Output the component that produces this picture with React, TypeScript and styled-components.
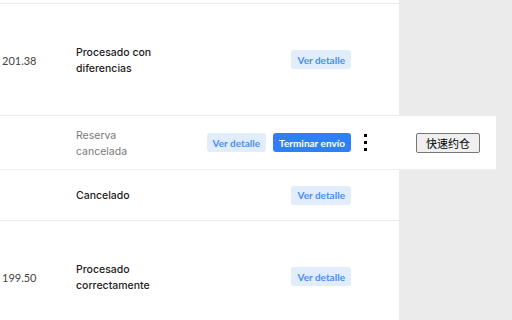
import React from "react";
import styled, { createGlobalStyle } from "styled-components";

const Global = createGlobalStyle`
  html, body { margin: 0; padding: 0; background: #ebebeb; }
  body { font-family: Lato, "Open Sans", sans-serif; overflow: hidden; }
`;

const Table = styled.div`
  width: 399px;
  min-height: 320px;
  background: #ffffff;
  padding-top: 3px;
  box-sizing: border-box;
`;

const Row = styled.div<{ $h: number }>`
  width: 399px;
  height: ${(p) => p.$h}px;
  display: flex;
  align-items: center;
  border-top: 1px solid #ebebeb;
  overflow: visible;
`;

const Amount = styled.div`
  width: 74px;
  padding-left: 2px;
  padding-top: 1px;
  font-size: 11px;
  color: #444;
  flex-shrink: 0;
`;

const Status = styled.div<{ $muted?: boolean }>`
  width: 130px;
  flex-shrink: 0;
  padding-top: 2px;
  font-family: Inter, Lato, sans-serif;
  font-size: 10.5px;
  line-height: 16px;
  font-weight: ${(p) => (p.$muted ? 400 : 500)};
  color: ${(p) => (p.$muted ? "#7a7a7a" : "#1c1c1c")};
`;

const Actions = styled.div`
  width: 145px;
  flex-shrink: 0;
  display: flex;
  justify-content: flex-end;
  gap: 7px;
`;

const Btn = styled.button<{ $primary?: boolean }>`
  height: 19px;
  padding: 0 6px;
  border: none;
  border-radius: 3px;
  font-family: Lato, sans-serif;
  font-size: 10px;
  font-weight: 700;
  cursor: pointer;
  background: ${(p) => (p.$primary ? "#2f80f8" : "#e2edfc")};
  color: ${(p) => (p.$primary ? "#ffffff" : "#4a8ef2")};
`;

const Menu = styled.div`
  width: 35px;
  padding-left: 13px;
  flex-shrink: 0;
  display: flex;
  flex-direction: column;
  gap: 4px;
`;

const Dot = styled.span`
  width: 3px;
  height: 3px;
  background: #000;
`;

const Extra = styled.div`
  width: 80px;
  padding-left: 17px;
  flex-shrink: 0;
  align-self: stretch;
  background: #ffffff;
  display: flex;
  align-items: center;
`;

const NativeBtn = styled.button`
  height: 20px;
  width: 64px;
  padding: 0;
  font-family: "Noto Sans CJK SC", sans-serif;
  font-size: 11px;
  color: #000;
  background: #efefef;
  border: 1px solid #767676;
  border-radius: 2px;
`;

export default function App() {
  return (
    <>
      <Global />
      <Table>
        <Row $h={111}>
          <Amount>201.38</Amount>
          <Status>Procesado con<br />diferencias</Status>
          <Actions><Btn>Ver detalle</Btn></Actions>
        </Row>
        <Row $h={53}>
          <Amount></Amount>
          <Status $muted>Reserva<br />cancelada</Status>
          <Actions>
            <Btn>Ver detalle</Btn>
            <Btn $primary>Terminar envío</Btn>
          </Actions>
          <Menu><Dot /><Dot /><Dot /></Menu>
          <Extra><NativeBtn>快速约仓</NativeBtn></Extra>
        </Row>
        <Row $h={50}>
          <Amount></Amount>
          <Status>Cancelado</Status>
          <Actions><Btn>Ver detalle</Btn></Actions>
        </Row>
        <Row $h={111}>
          <Amount>199.50</Amount>
          <Status>Procesado<br />correctamente</Status>
          <Actions><Btn>Ver detalle</Btn></Actions>
        </Row>
      </Table>
    </>
  );
}
